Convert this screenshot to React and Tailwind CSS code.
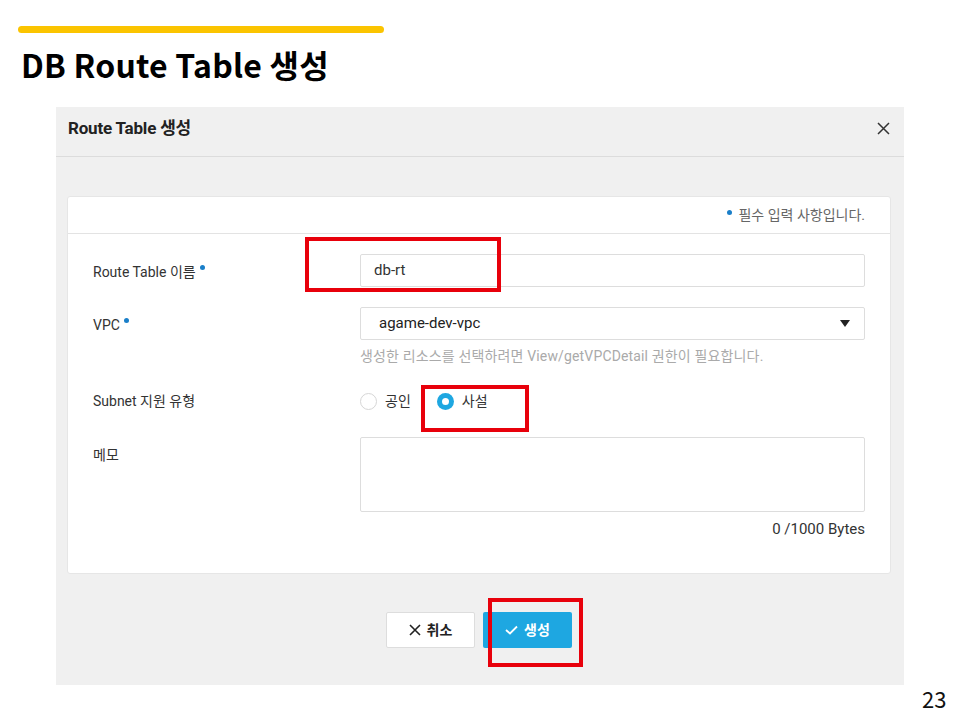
import React from "react";

const kr = { fontFamily: 'Roboto, "Noto Sans CJK KR", sans-serif' };

function Dot() {
  return <span className="inline-block w-[5px] h-[5px] rounded-full bg-[#1a7fc9] align-top ml-[4px] mt-[3px]" />;
}

export default function App() {
  return (
    <div className="relative w-[960px] h-[720px] bg-white overflow-hidden" style={kr}>
      <div className="pt-[26px] pl-[18px]">
        <div className="w-[366px] h-[7px] rounded-full bg-[#fbc400]" />
      </div>
      <div
        className="pl-[21px] mt-[8px] h-[46px] text-[32px] font-bold text-black leading-[46px] tracking-[0.2px]"
        style={{ fontFamily: '"Noto Sans CJK KR", "Noto Sans", sans-serif' }}
      >
        DB Route Table 생성
      </div>

      <div className="ml-[56px] mt-[20px] w-[848px] h-[578px] bg-[#f0f0f0] flex flex-col">
        <div className="h-[50px] border-b border-[#dcdcdc] flex items-start justify-between pl-[12px] pr-[14px] pt-[10px]">
          <span className="text-[17px] leading-[22px] font-bold text-[#222] tracking-[-0.2px]">Route Table 생성</span>
          <svg width="13" height="13" viewBox="0 0 13 13" className="mt-[5px]">
            <path d="M1 1 L12 12 M12 1 L1 12" stroke="#333" strokeWidth="1.5" />
          </svg>
        </div>

        <div className="mt-[39px] ml-[11px] mr-[13px] h-[378px] bg-white border border-[#e6e6e6] rounded-[3px] flex flex-col">
          <div className="h-[37px] border-b border-[#e3e3e3] flex items-center justify-end pr-[25px] text-[14px] text-[#666]">
            <span className="w-[5px] h-[5px] rounded-full bg-[#1a7fc9] mr-[6px] mb-[5px]" />
            필수 입력 사항입니다.
          </div>

          <div className="pl-[25px] pr-[25px] pt-[20px] flex flex-col text-[14px] text-[#333]">
            <div className="flex items-center h-[33px]">
              <div className="w-[267px] pt-[4px]">Route Table 이름<Dot /></div>
              <div className="flex-1 h-[33px] border border-[#dddddd] rounded-[2px] flex items-center pl-[13px] text-[15px] text-[#333]">
                db-rt
              </div>
            </div>

            <div className="flex items-center h-[33px] mt-[20px]">
              <div className="w-[267px] pt-[3px]">VPC<Dot /></div>
              <div className="flex-1 h-[33px] border border-[#dddddd] rounded-[2px] flex items-center justify-between pl-[18px] pr-[14px] text-[15px] text-[#222]">
                <span>agame-dev-vpc</span>
                <svg width="10" height="7" viewBox="0 0 10 7">
                  <path d="M0 0 L10 0 L5 7 Z" fill="#222" />
                </svg>
              </div>
            </div>
            <div className="ml-[267px] h-[32px] flex items-center text-[14px] text-[#aaaaaa] tracking-[0.15px]">
              생성한 리소스를 선택하려면 View/getVPCDetail 권한이 필요합니다.
            </div>

            <div className="flex items-center h-[30px] mt-[14px]">
              <div className="w-[267px]">Subnet 지원 유형</div>
              <div className="flex items-center">
                <span className="w-[17px] h-[17px] rounded-full border border-[#d6d6d6] bg-white" />
                <span className="ml-[8px]">공인</span>
                <span className="ml-[26px] w-[17px] h-[17px] rounded-full bg-[#1ea7e1] flex items-center justify-center">
                  <span className="w-[7px] h-[7px] rounded-full bg-white" />
                </span>
                <span className="ml-[8px]">사설</span>
              </div>
            </div>

            <div className="flex items-start mt-[21px]">
              <div className="w-[267px] pt-[8px]">메모</div>
              <div className="flex-1 h-[75px] border border-[#dddddd] rounded-[2px]" />
            </div>
            <div className="h-[34px] flex items-center justify-end text-[15px] text-[#333]">0 /1000 Bytes</div>
          </div>
        </div>

        <div className="flex justify-center gap-[8px] mt-[38px] pr-[2px]">
          <div className="w-[89px] h-[36px] bg-white border border-[#dddddd] rounded-[2px] flex items-center justify-center gap-[6px] text-[14px] font-bold text-[#222]">
            <svg width="12" height="12" viewBox="0 0 12 12">
              <path d="M1 1 L11 11 M11 1 L1 11" stroke="#222" strokeWidth="1.6" />
            </svg>
            취소
          </div>
          <div className="w-[89px] h-[36px] bg-[#1ea7e1] rounded-[2px] flex items-center justify-center gap-[6px] text-[14px] font-bold text-white">
            <svg width="13" height="10" viewBox="0 0 13 10">
              <path d="M1 5 L5 8.5 L12 1.5" stroke="#fff" strokeWidth="1.8" fill="none" />
            </svg>
            생성
          </div>
        </div>
      </div>

      <div
        className="absolute left-[922px] top-[684px] text-[22px] text-[#111] leading-[28px]"
        style={{ fontFamily: '"Noto Sans CJK KR", sans-serif' }}
      >
        23
      </div>

      <div className="absolute left-[305px] top-[237px] w-[196px] h-[55px] border-[4px] border-[#e8000b]" />
      <div className="absolute left-[421px] top-[385px] w-[108px] h-[47px] border-[4px] border-[#e8000b]" />
      <div className="absolute left-[488px] top-[598px] w-[95px] h-[69px] border-[4px] border-[#e8000b]" />
    </div>
  );
}
